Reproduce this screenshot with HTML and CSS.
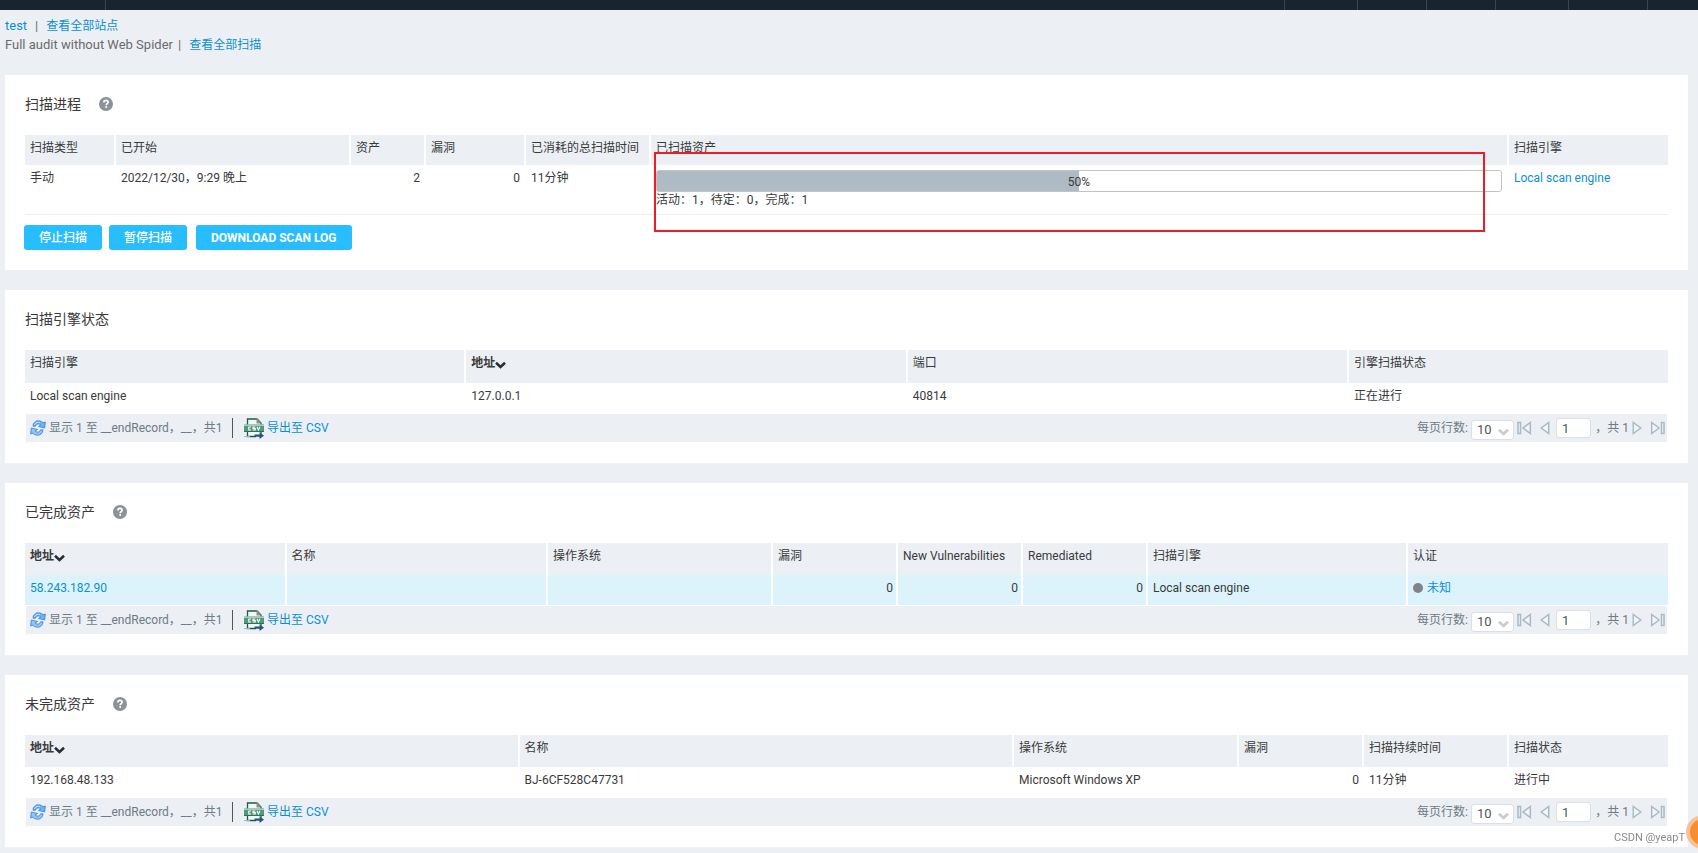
FILE: index.html
```html
<!DOCTYPE html>
<html lang="zh-CN">
<head>
<meta charset="utf-8">
<title>test - 扫描进程</title>
<link rel="stylesheet" href="styles.css">
</head>
<body>
<svg class="sprite" aria-hidden="true">
  <symbol id="i-help" viewBox="0 0 14 14">
    <circle cx="7" cy="7" r="7" fill="#8d9298"/>
    <path d="M4.900 5.400C4.900 4.100 5.800 3.400 7 3.400s2.100.7 2.100 1.800c0 1.400-1.900 1.500-1.900 3" fill="none" stroke="#fff" stroke-width="1.700"/>
    <rect x="6.300" y="9.200" width="1.800" height="1.700" fill="#fff"/>
  </symbol>
  <symbol id="i-sort" viewBox="0 0 11 8">
    <path d="M1 1.800 5.500 6 10 1.800" fill="none" stroke="#2b2f33" stroke-width="2.600"/>
  </symbol>
  <symbol id="i-refresh" viewBox="0 0 16 16">
    <path d="M3 6.200C3 2.500 6 .6 8.800.8c2 .1 3.200.9 4.200 2L15.300 2l-.6 6L8.500 6.500 10.700 5C9 3.300 6.200 3.500 5.500 6.200Z" fill="#6fb3f2" stroke="#2b7fdc" stroke-width=".8"/>
    <path d="M13 9.800c0 3.700-3 5.600-5.800 5.400-2-.1-3.200-.9-4.200-2L.7 14l.6-6 6.200 1.500L5.300 11c1.700 1.700 4.500 1.500 5.200-1.200Z" fill="#8cc6f8" stroke="#2b7fdc" stroke-width=".8"/>
    <path d="M4.200 4.800C5 2.800 7.500 1.800 10 2.500" fill="none" stroke="#d3eaff" stroke-width=".9"/>
  </symbol>
  <symbol id="i-csv" viewBox="0 0 20 21">
    <path d="M3.500 7V1h9.500L17 5v3" fill="#f4f6f6" stroke="#1c5c4c" stroke-width="1.300"/>
    <path d="M12.500 0 17.500 5.500h-5Z" fill="#8b8f90"/>
    <rect x="4" y="14" width="12.500" height="4" fill="#f8fafa"/>
    <path d="M3.500 14v4.500H12M17 14v2" fill="none" stroke="#1c5c4c" stroke-width="1.300"/>
    <rect x="0" y="6.500" width="20" height="7.500" fill="#4d9a7c"/>
    <rect x="0" y="6.500" width="20" height="1.500" fill="#a5cdbd"/>
    <rect x="0" y="13" width="20" height="1" fill="#2a7159"/>
    <path d="M7 9H4.800v3H7M11.300 9H9v1.500h2.200V12H8.800M13 8.700l1.500 3.300L16 8.700" fill="none" stroke="#fff" stroke-width="1.100"/>
    <path d="M0 18.500h6" stroke="#a9b4b6"/>
    <path d="M10.500 16.500h5V14.200L20 17.700 15.500 21v-2.300h-5Z" fill="#245680"/>
  </symbol>
  <symbol id="i-first" viewBox="0 0 15 14">
    <path d="M1 1.500h2.500v11H1ZM13.300 1.500v11L6 7Z" fill="#f3f6f9" stroke="#a9bac6" stroke-width="1.500"/>
  </symbol>
  <symbol id="i-prev" viewBox="0 0 10 14">
    <path d="M8.700 1.500v11L1.300 7Z" fill="#f3f6f9" stroke="#a9bac6" stroke-width="1.500"/>
  </symbol>
</svg>

<header class="topbar">
  <span class="tb-brand"></span>
  <span class="tb-item w73"></span><span class="tb-item w69"></span><span class="tb-item w69"></span><span class="tb-item w73"></span><span class="tb-item w79"></span><span class="tb-item w51"></span>
</header>

<nav class="crumbs">
  <div class="crumb"><a href="#">test</a><span class="bar">|</span><a href="#">查看全部站点</a></div>
  <div class="crumb"><span>Full audit without Web Spider</span><span class="bar tight">|</span><a href="#">查看全部扫描</a></div>
</nav>

<main>
  <section class="panel">
    <h2>扫描进程 <svg class="help"><use href="#i-help"/></svg></h2>
    <div class="progress-wrap">
      <table class="grid progress-grid">
        <colgroup><col class="c91"><col class="c235"><col class="c75"><col class="c100"><col class="c125"><col><col class="c159"></colgroup>
        <thead><tr><th>扫描类型</th><th>已开始</th><th>资产</th><th>漏洞</th><th>已消耗的总扫描时间</th><th>已扫描资产</th><th>扫描引擎</th></tr></thead>
        <tbody><tr>
          <td>手动</td><td>2022/12/30，9:29 晚上</td><td class="num">2</td><td class="num">0</td><td>11分钟</td>
          <td><div class="meter"><div class="fill" style="width:50%"></div><span>50%</span></div><div class="counts">活动：1，待定：0，完成：1</div></td>
          <td><a href="#">Local scan engine</a></td>
        </tr></tbody>
      </table>
      <div class="mark"></div>
    </div>
    <div class="actions"><button type="button">停止扫描</button><button type="button">暂停扫描</button><button type="button" class="log">DOWNLOAD SCAN LOG</button></div>
  </section>

  <section class="panel">
    <h2>扫描引擎状态</h2>
    <table class="grid engines">
      <colgroup><col><col><col><col class="c319"></colgroup>
      <thead><tr><th>扫描引擎</th><th class="sorted">地址<svg class="sort"><use href="#i-sort"/></svg></th><th>端口</th><th>引擎扫描状态</th></tr></thead>
      <tbody><tr><td>Local scan engine</td><td>127.0.0.1</td><td>40814</td><td>正在进行</td></tr></tbody>
    </table>
    <div class="foot">
      <svg class="refresh"><use href="#i-refresh"/></svg><span class="info">显示 1 至 __endRecord，__，共1</span>
      <a class="export" href="#"><svg class="csv"><use href="#i-csv"/></svg>导出至 CSV</a>
      <div class="pager">
        <label for="rows1">每页行数:</label>
        <span class="pick"><select id="rows1"><option>10</option></select><svg class="chev"><use href="#i-sort"/></svg></span>
        <button type="button" class="first" aria-label="首页"><svg><use href="#i-first"/></svg></button>
        <button type="button" class="prev" aria-label="上一页"><svg><use href="#i-prev"/></svg></button>
        <input type="text" value="1" aria-label="页码"><span class="of">，共 1</span>
        <button type="button" class="next" aria-label="下一页"><svg><use href="#i-prev"/></svg></button>
        <button type="button" class="last" aria-label="末页"><svg><use href="#i-first"/></svg></button>
      </div>
    </div>
  </section>

  <section class="panel">
    <h2>已完成资产 <svg class="help"><use href="#i-help"/></svg></h2>
    <table class="grid done">
      <colgroup><col><col><col class="c225"><col class="c125"><col class="c125"><col class="c125"><col class="c260"><col class="c260"></colgroup>
      <thead><tr><th class="sorted">地址<svg class="sort"><use href="#i-sort"/></svg></th><th>名称</th><th>操作系统</th><th>漏洞</th><th>New Vulnerabilities</th><th>Remediated</th><th>扫描引擎</th><th>认证</th></tr></thead>
      <tbody><tr><td><a href="#">58.243.182.90</a></td><td></td><td></td><td class="num">0</td><td class="num">0</td><td class="num">0</td><td>Local scan engine</td><td><a href="#"><i class="dot"></i>未知</a></td></tr></tbody>
    </table>
    <div class="foot">
      <svg class="refresh"><use href="#i-refresh"/></svg><span class="info">显示 1 至 __endRecord，__，共1</span>
      <a class="export" href="#"><svg class="csv"><use href="#i-csv"/></svg>导出至 CSV</a>
      <div class="pager">
        <label for="rows2">每页行数:</label>
        <span class="pick"><select id="rows2"><option>10</option></select><svg class="chev"><use href="#i-sort"/></svg></span>
        <button type="button" class="first" aria-label="首页"><svg><use href="#i-first"/></svg></button>
        <button type="button" class="prev" aria-label="上一页"><svg><use href="#i-prev"/></svg></button>
        <input type="text" value="1" aria-label="页码"><span class="of">，共 1</span>
        <button type="button" class="next" aria-label="下一页"><svg><use href="#i-prev"/></svg></button>
        <button type="button" class="last" aria-label="末页"><svg><use href="#i-first"/></svg></button>
      </div>
    </div>
  </section>

  <section class="panel">
    <h2>未完成资产 <svg class="help"><use href="#i-help"/></svg></h2>
    <table class="grid pending">
      <colgroup><col><col><col class="c225"><col class="c125"><col class="c145"><col class="c159"></colgroup>
      <thead><tr><th class="sorted">地址<svg class="sort"><use href="#i-sort"/></svg></th><th>名称</th><th>操作系统</th><th>漏洞</th><th>扫描持续时间</th><th>扫描状态</th></tr></thead>
      <tbody><tr><td>192.168.48.133</td><td>BJ-6CF528C47731</td><td>Microsoft Windows XP</td><td class="num">0</td><td>11分钟</td><td>进行中</td></tr></tbody>
    </table>
    <div class="foot">
      <svg class="refresh"><use href="#i-refresh"/></svg><span class="info">显示 1 至 __endRecord，__，共1</span>
      <a class="export" href="#"><svg class="csv"><use href="#i-csv"/></svg>导出至 CSV</a>
      <div class="pager">
        <label for="rows3">每页行数:</label>
        <span class="pick"><select id="rows3"><option>10</option></select><svg class="chev"><use href="#i-sort"/></svg></span>
        <button type="button" class="first" aria-label="首页"><svg><use href="#i-first"/></svg></button>
        <button type="button" class="prev" aria-label="上一页"><svg><use href="#i-prev"/></svg></button>
        <input type="text" value="1" aria-label="页码"><span class="of">，共 1</span>
        <button type="button" class="next" aria-label="下一页"><svg><use href="#i-prev"/></svg></button>
        <button type="button" class="last" aria-label="末页"><svg><use href="#i-first"/></svg></button>
      </div>
    </div>
  </section>
</main>

<div class="overlay"><span class="credit">CSDN @yeapT</span><span class="bubble"></span></div>
</body>
</html>
```

FILE: styles.css
```css
* { box-sizing: border-box; }
body {
  margin: 0;
  background: #ecf0f5;
  color: #3a3a3a;
  font: 12px/16px Roboto, "Noto Sans CJK SC", sans-serif;
  overflow-x: hidden;
}
a { color: #0d90d1; text-decoration: none; }
button, input, select { font: inherit; color: inherit; }
svg { display: block; }
.sprite { position: absolute; width: 0; height: 0; }

.topbar { display: flex; height: 10px; background: #18252f; }
.tb-brand { width: 106px; border-right: 1px solid #3a4650; margin-right: auto; }
.tb-item { border-left: 1px solid #3a4650; }
.w73 { width: 73px; }
.w69 { width: 69px; }
.w79 { width: 79px; }
.w51 { width: 51px; }

.crumbs { padding: 7px 5px 0; height: 65px; color: #6b6b6b; }
.crumb { height: 19px; line-height: 18px; font-size: 13px; white-space: nowrap; }
.crumb a { font-size: 12px; }
.crumb a:first-child { font-size: 13px; }
.bar { margin: 0 8px; }
.bar.tight { margin-left: 5px; }

main { padding: 0 10px 0 5px; }
.panel { background: #fff; padding: 19px 20px 21px; margin-bottom: 20px; }
.panel:first-child { padding-bottom: 20px; }
h2 {
  display: flex;
  align-items: center;
  gap: 18px;
  height: 20px;
  margin: 0 0 21px;
  font-size: 14px;
  font-weight: 400;
}
.help { width: 14px; height: 14px; }

.grid { width: 100%; table-layout: fixed; border-collapse: separate; border-spacing: 0; }
th, td {
  padding: 5px 3px 5px 5px;
  text-align: left;
  vertical-align: top;
  font-weight: 400;
  white-space: nowrap;
  border-right: 2px solid #fff;
}
th:last-child, td:last-child { border-right: 0; }
th { height: 32px; background: #ecf0f5; }
td { height: 31px; }
.engines th { height: 33px; }
.progress-grid th { height: 30px; }
.progress-grid td { height: 50px; border-right: 0; border-bottom: 1px solid #ecf0f5; }
.progress-grid td.num { padding-right: 6px; }
.sorted { font-weight: 700; }
.sort { display: inline-block; width: 11px; height: 8px; vertical-align: -2px; }
.num { text-align: right; }
.done td { background: #dcf3fc; border-bottom: 1px solid #fff; }
.dot { display: inline-block; width: 10px; height: 10px; margin-right: 4px; border-radius: 50%; background: #7d858b; vertical-align: -1px; }
.c75 { width: 75px; }
.c91 { width: 91px; }
.c100 { width: 100px; }
.c125 { width: 125px; }
.c145 { width: 145px; }
.c159 { width: 159px; }
.c225 { width: 225px; }
.c235 { width: 235px; }
.c260 { width: 260px; }
.c319 { width: 319px; }

.progress-wrap { position: relative; }
.meter { position: relative; height: 22px; margin-right: 4px; border: 1px solid #c3c3c3; border-radius: 3px; text-align: center; line-height: 22px; }
.fill { position: absolute; left: 0; top: 0; bottom: 0; background: #aebbc4; }
.meter span { position: relative; }
.mark { position: absolute; left: 629px; right: 183px; top: 17px; height: 80px; border: 2px solid #ee1c25; }

.actions { display: flex; margin: 10px -1px 0; gap: 7px; }
.actions button { height: 25px; padding: 0 15px; border: 0; border-radius: 3px; background: #27bdff; color: #fff; font-weight: 500; }
.actions .log { margin-left: 2px; font-weight: 700; }

.foot { display: flex; align-items: center; height: 28px; margin: 0 1px; padding: 0 2px 0 4px; background: #eceff4; color: #6c7b85; white-space: nowrap; }
.refresh { width: 16px; height: 16px; margin-right: 3px; }
.info { width: 183px; }
.export { display: flex; align-items: center; gap: 3px; height: 20px; padding-left: 11px; border-left: 1px solid #555; }
.csv { width: 20px; height: 21px; }
.pager { display: flex; align-items: center; margin-left: auto; }
.pick { position: relative; margin: 3px 3px 0; }
.pager select { display: block; appearance: none; width: 43px; height: 20px; padding: 0 0 0 5px; border: 1px solid #dcdfe3; border-radius: 3px; background: #fff; font-size: 13px; color: #555; }
.chev { position: absolute; right: 5px; top: 8px; width: 11px; height: 8px; opacity: .25; }
.pager input { width: 35px; height: 20px; padding: 0 5px; border: 1px solid #dcdfe3; border-radius: 3px; background: #fff; color: #555; font-size: 13px; }
.pager button { padding: 0; border: 0; background: none; }
.first svg, .last svg { width: 15px; height: 14px; }
.prev svg, .next svg { width: 10px; height: 14px; }
.next svg, .last svg { transform: scaleX(-1); }
.prev { margin: 0 6px 0 8px; }
.of { width: 41px; padding-right: 3px; text-align: right; }
.last { margin-left: 8px; }

.overlay { position: fixed; right: 0; bottom: 4px; width: 84px; height: 34px; overflow: hidden; pointer-events: none; }
.credit { position: absolute; left: 0; top: 15px; font-size: 11px; color: #8a8a8a; white-space: nowrap; }
.bubble { position: absolute; right: -22px; top: 0; width: 34px; height: 34px; border: 4px solid #f5c396; border-radius: 50%; background: #f98e30; }
```
